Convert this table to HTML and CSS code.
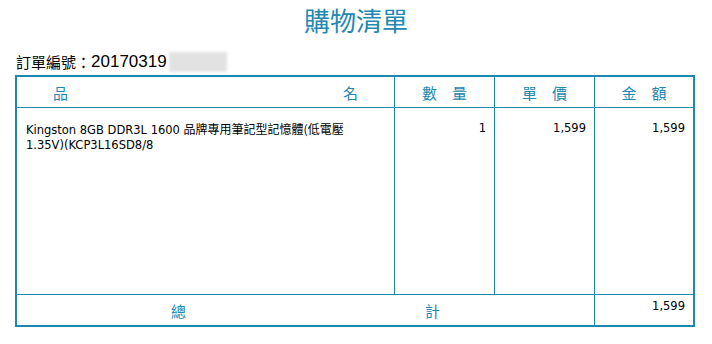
FILE: index.html
```html
<!DOCTYPE html>
<html lang="zh-Hant">
<head>
<meta charset="utf-8">
<title>購物清單</title>
<link rel="stylesheet" href="styles.css">
</head>
<body>
<div class="page">
  <h1 class="title">購物清單</h1>
  <div class="order">
    <span class="order-label">訂單編號：</span><span class="order-no">20170319</span><span class="blur"></span>
  </div>
  <table class="cart">
    <colgroup>
      <col class="c-name">
      <col class="c-qty">
      <col class="c-price">
      <col class="c-amount">
    </colgroup>
    <thead>
      <tr class="head-row">
        <th class="col-line"><div class="spread name-spread"><span>品</span><span>名</span></div></th>
        <th class="col-line">數　量</th>
        <th class="col-line">單　價</th>
        <th>金　額</th>
      </tr>
    </thead>
    <tbody>
      <tr class="item-row">
        <td class="col-line name">Kingston 8GB DDR3L 1600 <span class="cjk">品牌專用筆記型記憶體(低電壓</span>1.35V)(KCP3L16SD8/8</td>
        <td class="col-line num">1</td>
        <td class="col-line num">1,599</td>
        <td class="num">1,599</td>
      </tr>
    </tbody>
    <tfoot>
      <tr class="foot-row">
        <td class="col-line total-label" colspan="3"><div class="spread total-spread"><span>總</span><span>計</span></div></td>
        <td class="num total-value">1,599</td>
      </tr>
    </tfoot>
  </table>
</div>
</body>
</html>
```

FILE: styles.css
```css
* { box-sizing: border-box; }
html, body { margin: 0; padding: 0; background: #fff; }
body {
  font-family: "Noto Sans CJK TC", "Noto Sans", sans-serif;
  color: #000;
}
.page {
  width: 712px;
  padding-left: 15px;
}
.title {
  margin: 0;
  width: 682px;
  height: 40px;
  line-height: 40px;
  text-align: center;
  font-size: 26px;
  font-weight: normal;
  color: #2588b2;
}
.order {
  height: 35px;
  padding-top: 8px;
  padding-left: 1px;
  display: flex;
  align-items: center;
  font-size: 16px;
}
.order-label {
  font-family: "Noto Sans CJK TC", sans-serif;
  font-size: 15px;
}
.order-no {
  font-family: "Liberation Sans", "Noto Sans CJK TC", sans-serif;
  font-size: 17px;
}
.blur {
  display: inline-block;
  width: 58px;
  height: 20px;
  margin-left: 2px;
  background: #e2e2e2;
  filter: blur(1.5px);
}
.cart {
  width: 680px;
  table-layout: fixed;
  border-collapse: separate;
  border-spacing: 0;
  border: 2px solid #1d87ad;
}
.c-name { width: 378px; }
.c-qty { width: 100px; }
.c-price { width: 100px; }
.c-amount { width: 98px; }
.cart th, .cart td {
  padding: 0;
  border-bottom: 1px solid #1d87ad;
}
.cart tfoot td { border-bottom: none; }
.col-line { border-right: 1px solid #1d87ad; }
.head-row { height: 31px; }
.head-row th {
  font-weight: normal;
  font-size: 15px;
  color: #2387b0;
  text-align: center;
  vertical-align: middle;
  font-family: "Noto Sans CJK TC", sans-serif;
}
.spread {
  display: flex;
  justify-content: space-between;
}
.name-spread { padding: 0 36px; }
.item-row { height: 187px; }
.item-row td {
  vertical-align: top;
  font-family: "DejaVu Sans", "Noto Sans CJK TC", sans-serif;
  font-size: 11.5px;
  line-height: 15px;
  padding-top: 13px;
}
.cjk {
  font-family: "Noto Sans CJK TC", sans-serif;
  font-size: 12px;
}
.name {
  padding-left: 9px !important;
  padding-right: 30px !important;
}
.num {
  text-align: right;
  padding-right: 8px !important;
  font-family: "DejaVu Sans", sans-serif;
  font-size: 11.5px;
}
.foot-row { height: 30px; }
.total-label {
  vertical-align: middle;
  font-size: 15px;
  color: #2387b0;
}
.total-spread { padding: 0 154px; }
.total-value {
  vertical-align: top;
  padding-top: 4px !important;
  line-height: 15px;
}
```
